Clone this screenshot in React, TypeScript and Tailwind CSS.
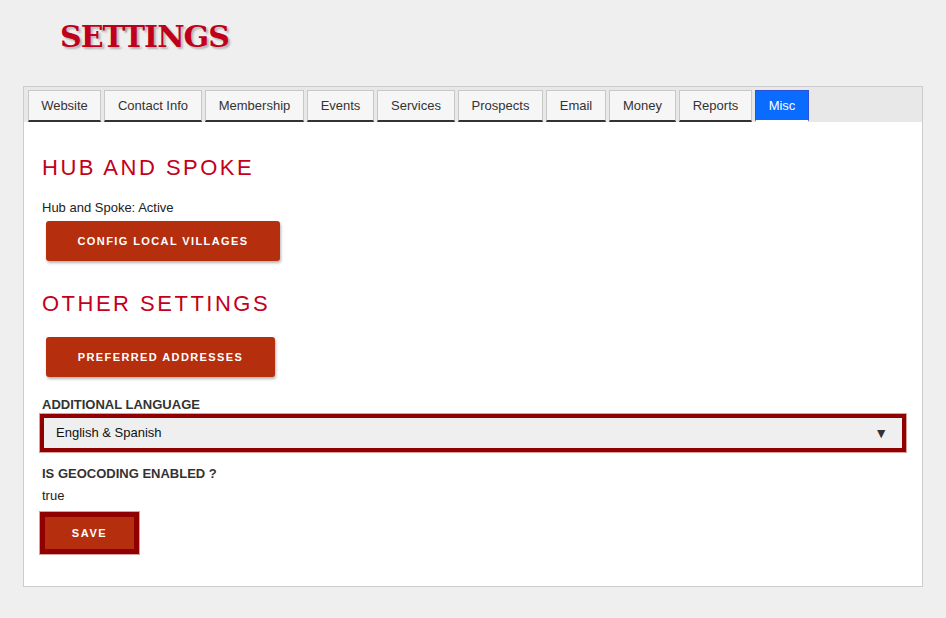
import React from "react";

const tabs: { label: string; w: string; active?: boolean }[] = [
  { label: "Website", w: "w-[73px]" },
  { label: "Contact Info", w: "w-[98px]" },
  { label: "Membership", w: "w-[99px]" },
  { label: "Events", w: "w-[67px]" },
  { label: "Services", w: "w-[78px]" },
  { label: "Prospects", w: "w-[85px]" },
  { label: "Email", w: "w-[60px]" },
  { label: "Money", w: "w-[67px]" },
  { label: "Reports", w: "w-[73px]" },
  { label: "Misc", w: "w-[54px]", active: true },
];

function RedButton({ label, w }: { label: string; w: string }) {
  return (
    <button
      className={`${w} h-[40px] ml-[4px] rounded-[3px] bg-[#b52e0e] text-white text-[11px] font-bold tracking-[1.4px] shadow-[1px_2px_3px_rgba(0,0,0,0.3)]`}
    >
      {label}
    </button>
  );
}

export default function App() {
  return (
    <div
      className="min-h-[618px] w-[946px] bg-[#efefef] text-[#222]"
      style={{ fontFamily: '"Liberation Sans", Arial, sans-serif' }}
    >
      <div className="h-[86px] pl-[60px] pt-[17px]">
        <h1
          className="text-[30px] font-black leading-[40px] tracking-[-1px] text-[#c0001a] [text-shadow:2px_2px_2px_rgba(0,0,0,0.25)]"
          style={{ fontFamily: '"DejaVu Serif", serif' }}
        >
          SETTINGS
        </h1>
      </div>
      <div className="ml-[23px] w-[900px] h-[501px] border border-[#cccccc] bg-white">
        <div className="flex h-[35px] items-end gap-[3px] bg-[#e8e8e8] pl-[4px]">
          {tabs.map((t) =>
            t.active ? (
              <div
                key={t.label}
                className={`${t.w} flex h-[32px] items-center justify-center border border-[#2d4fd6] border-b-2 border-b-white bg-[#0a6cff] text-[13px] text-white`}
              >
                {t.label}
              </div>
            ) : (
              <div
                key={t.label}
                className={`${t.w} flex h-[32px] items-center justify-center border border-[#c8c8c8] border-b-2 border-b-[#333] bg-[#f6f6f6] text-[13px] text-[#333]`}
              >
                {t.label}
              </div>
            )
          )}
        </div>
        <div className="pl-[18px] pr-[14px]">
          <h2 className="mt-[33px] text-[22px] leading-[26px] tracking-[2.5px] text-[#c4001a]">
            HUB AND SPOKE
          </h2>
          <p className="mt-[19px] text-[13px] leading-[16px] text-[#222]">Hub and Spoke: Active</p>
          <div className="mt-[5px]">
            <RedButton label="CONFIG LOCAL VILLAGES" w="w-[234px]" />
          </div>
          <h2 className="mt-[30px] text-[22px] leading-[26px] tracking-[2.5px] text-[#c4001a]">
            OTHER SETTINGS
          </h2>
          <div className="mt-[20px]">
            <RedButton label="PREFERRED ADDRESSES" w="w-[229px]" />
          </div>
          <p className="mt-[20px] text-[13px] font-bold leading-[16px] text-[#333]">
            ADDITIONAL LANGUAGE
          </p>
          <div className="ml-[-2px] mt-[1px] flex h-[38px] w-[866px] items-center justify-between border-[4px] border-[#900000] bg-[#efefef] pl-[12px] pr-[14px] outline outline-1 outline-[#d9a0a0]">
            <span className="text-[13px] text-[#111]">English &amp; Spanish</span>
            <span className="text-[14px] text-[#333]">▼</span>
          </div>
          <p className="mt-[14px] text-[13px] font-bold leading-[16px] text-[#333]">
            IS GEOCODING ENABLED ?
          </p>
          <p className="mt-[6px] text-[13px] leading-[16px] text-[#222]">true</p>
          <button className="ml-[-2px] mt-[8px] h-[42px] w-[99px] border-[5px] border-[#900000] bg-[#b52e0e] text-[11px] font-bold tracking-[1.6px] text-white outline outline-1 outline-[#d9a0a0]">
            SAVE
          </button>
        </div>
      </div>
    </div>
  );
}
